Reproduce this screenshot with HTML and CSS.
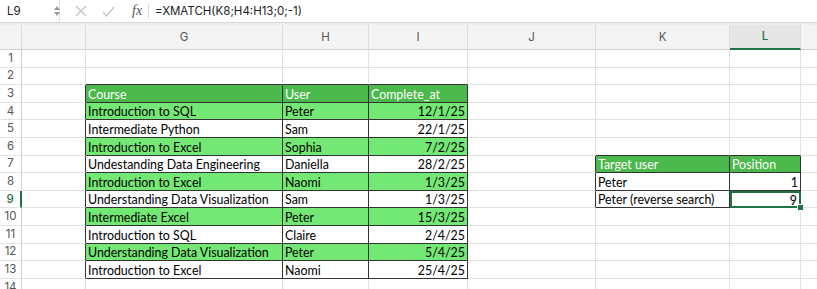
FILE: index.html
```html
<!DOCTYPE html>
<html lang="en">
<head>
    <meta charset="UTF-8">
    <title>XMATCH example</title>
    <link rel="stylesheet" href="styles.css">
</head>
<body>

    <!-- Formula bar -->
    <div class="formula-bar">
        <div class="name-box">
            <span>L9</span>
            <svg class="stepper" width="6" height="12" viewBox="0 0 6 12">
                <path d="M0 5 L3 1 L6 5 Z" fill="#9a9a9a"/>
                <path d="M0 7 L3 11 L6 7 Z" fill="#9a9a9a"/>
            </svg>
        </div>
        <svg class="fb-icon" width="12" height="12" viewBox="0 0 12 12">
            <path d="M1 1 L11 11 M11 1 L1 11" stroke="#c4c4c4" stroke-width="1.3"/>
        </svg>
        <svg class="fb-icon" width="13" height="11" viewBox="0 0 13 11">
            <path d="M1 6 L4.5 10 L12 1" stroke="#c4c4c4" stroke-width="1.3" fill="none"/>
        </svg>
        <span class="fx">fx</span>
        <span class="formula">=XMATCH(K8;H4:H13;0;-1)</span>
    </div>
    <div class="gap-band"></div>

    <!-- Sheet -->
    <table class="sheet">
        <colgroup>
            <col class="c-row"><col class="c-f"><col class="c-g"><col class="c-h"><col class="c-i">
            <col class="c-j"><col class="c-k"><col class="c-l"><col class="c-m">
        </colgroup>
        <tr class="col-head">
            <td class="corner"></td><td></td><td>G</td><td>H</td><td>I</td><td>J</td><td>K</td><td class="active">L</td><td></td>
        </tr>
        <tr>
            <td class="rh">1</td><td></td><td></td><td></td><td></td><td></td><td></td><td></td><td></td>
        </tr>
        <tr>
            <td class="rh">2</td><td></td><td class="ab"></td><td class="ab"></td><td class="ab"></td><td></td><td></td><td></td><td></td>
        </tr>
        <tr>
            <td class="rh">3</td><td class="lf"></td><td class="b head">Course</td><td class="b head">User</td><td class="b head">Complete_at</td><td></td><td></td><td></td><td></td>
        </tr>
        <tr class="green">
            <td class="rh">4</td><td class="lf"></td><td class="b">Introduction to SQL</td><td class="b">Peter</td><td class="b num">12/1/25</td><td></td><td></td><td></td><td></td>
        </tr>
        <tr>
            <td class="rh">5</td><td class="lf"></td><td class="b">Intermediate Python</td><td class="b">Sam</td><td class="b num">22/1/25</td><td></td><td></td><td></td><td></td>
        </tr>
        <tr class="green">
            <td class="rh">6</td><td class="lf"></td><td class="b">Introduction to Excel</td><td class="b">Sophia</td><td class="b num">7/2/25</td><td></td><td class="ab"></td><td class="ab"></td><td></td>
        </tr>
        <tr>
            <td class="rh">7</td><td class="lf"></td><td class="b">Undestanding Data Engineering</td><td class="b">Daniella</td><td class="b num">28/2/25</td><td class="lf"></td><td class="b head">Target user</td><td class="b head">Position</td><td></td>
        </tr>
        <tr class="green">
            <td class="rh">8</td><td class="lf"></td><td class="b">Introduction to Excel</td><td class="b">Naomi</td><td class="b num">1/3/25</td><td class="lf white"></td><td class="b white">Peter</td><td class="b white num">1</td><td class="white"></td>
        </tr>
        <tr>
            <td class="rh active">9</td><td class="lf"></td><td class="b">Understanding Data Visualization</td><td class="b">Sam</td><td class="b num">1/3/25</td><td class="lf"></td><td class="b">Peter (reverse search)</td><td class="b num selected">9</td><td></td>
        </tr>
        <tr class="green">
            <td class="rh">10</td><td class="lf"></td><td class="b">Intermediate Excel</td><td class="b">Peter</td><td class="b num">15/3/25</td><td class="white"></td><td class="white"></td><td class="white"></td><td class="white"></td>
        </tr>
        <tr>
            <td class="rh">11</td><td class="lf"></td><td class="b">Introduction to SQL</td><td class="b">Claire</td><td class="b num">2/4/25</td><td></td><td></td><td></td><td></td>
        </tr>
        <tr class="green">
            <td class="rh">12</td><td class="lf"></td><td class="b">Understanding Data Visualization</td><td class="b">Peter</td><td class="b num">5/4/25</td><td class="white"></td><td class="white"></td><td class="white"></td><td class="white"></td>
        </tr>
        <tr>
            <td class="rh">13</td><td class="lf"></td><td class="b">Introduction to Excel</td><td class="b">Naomi</td><td class="b num">25/4/25</td><td></td><td></td><td></td><td></td>
        </tr>
        <tr>
            <td class="rh">14</td><td></td><td></td><td></td><td></td><td></td><td></td><td></td><td></td>
        </tr>
    </table>

</body>
</html>
```

FILE: styles.css
```css
body {
    margin: 0;
    background: #fff;
    overflow: hidden;
    font-family: Inter, "Liberation Sans", sans-serif;
}

/* formula bar */
.formula-bar {
    display: flex;
    align-items: center;
    height: 22px;
    border-bottom: 1px solid #d6d6d6;
    font-size: 11.5px;
    color: #222;
}

.name-box {
    display: flex;
    align-items: center;
    justify-content: space-between;
    width: 60px;
    height: 100%;
    padding-left: 7px;
    border-right: 1px solid #e4e4e4;
    box-sizing: border-box;
    padding-right: 0;
}

.stepper {
    margin-right: -1px;
}

.fb-icon {
    margin-left: 15px;
}

.fx {
    margin-left: 17px;
    padding-right: 6px;
    border-right: 1px solid #d8d8d8;
    font-family: "Liberation Serif", serif;
    font-style: italic;
    font-size: 14px;
    color: #555;
    line-height: 14px;
}

.formula {
    margin-left: 6px;
}

.gap-band {
    height: 2px;
    background: #ededed;
}

/* sheet */
.sheet {
    border-collapse: separate;
    border-spacing: 0;
    table-layout: fixed;
    width: 860px;
}

.c-row { width: 22px; }
.c-f { width: 64px; }
.c-g { width: 197px; }
.c-h { width: 86px; }
.c-i { width: 99px; }
.c-j { width: 128px; }
.c-k { width: 134px; }
.c-l { width: 71px; }
.c-m { width: 59px; }

.sheet td {
    height: 17.6px;
    padding: 0 0 0 2px;
    border-right: 1px solid #e2e2e2;
    border-bottom: 1px solid #e2e2e2;
    box-sizing: border-box;
    font-family: Lato, "Liberation Sans", sans-serif;
    font-size: 12.4px;
    line-height: 15px;
    vertical-align: bottom;
    color: #000;
    white-space: nowrap;
    overflow: hidden;
}

/* column header */
.col-head td {
    height: 25px;
    background: #f4f4f4;
    border-right: 1px solid #dcdcdc;
    border-bottom: 1px solid #d0d0d0;
    font-family: Inter, "Liberation Sans", sans-serif;
    font-size: 11.5px;
    color: #555;
    text-align: center;
    vertical-align: middle;
    padding: 0;
}

.col-head td.active {
    background: #e6e6e6;
    color: #217346;
    border-bottom: 2px solid #217346;
    font-weight: 500;
}

.corner {
    background: #f4f4f4 linear-gradient(to top left, #d6d6d6 50%, transparent 50%) no-repeat;
    background-size: 17px 17px;
    background-position: right 2px bottom 2px;
}

/* row header */
.sheet td.rh {
    background: #fff;
    border-right: 1px solid #d0d0d0;
    font-family: Inter, "Liberation Sans", sans-serif;
    font-size: 11.5px;
    color: #555;
    text-align: center;
    vertical-align: middle;
    padding: 0;
}

.sheet td.rh.active {
    color: #217346;
    border-right: 2px solid #217346;
    font-weight: 500;
}

/* data tables */
.sheet td.b {
    border-right: 1px solid #333;
    border-bottom: 1px solid #333;
}

.sheet td.ab {
    border-bottom: 1px solid #333;
}

.sheet td.lf {
    border-right: 1px solid #333;
}

.green td.b {
    background: #74e874;
}

.sheet td.white {
    background: #fff;
}

.sheet td.head {
    background: #4cb94c;
    color: #fff;
}

.sheet td.num {
    text-align: right;
    padding-right: 2px;
}

.sheet td.selected {
    position: relative;
    overflow: visible;
    border: none;
    box-shadow: inset 0 0 0 2px #217346;
    padding-right: 4px;
}

.sheet td.selected::after {
    content: "";
    position: absolute;
    right: -3px;
    bottom: -3px;
    width: 5px;
    height: 5px;
    background: #217346;
    border: 1px solid #fff;
}
```
